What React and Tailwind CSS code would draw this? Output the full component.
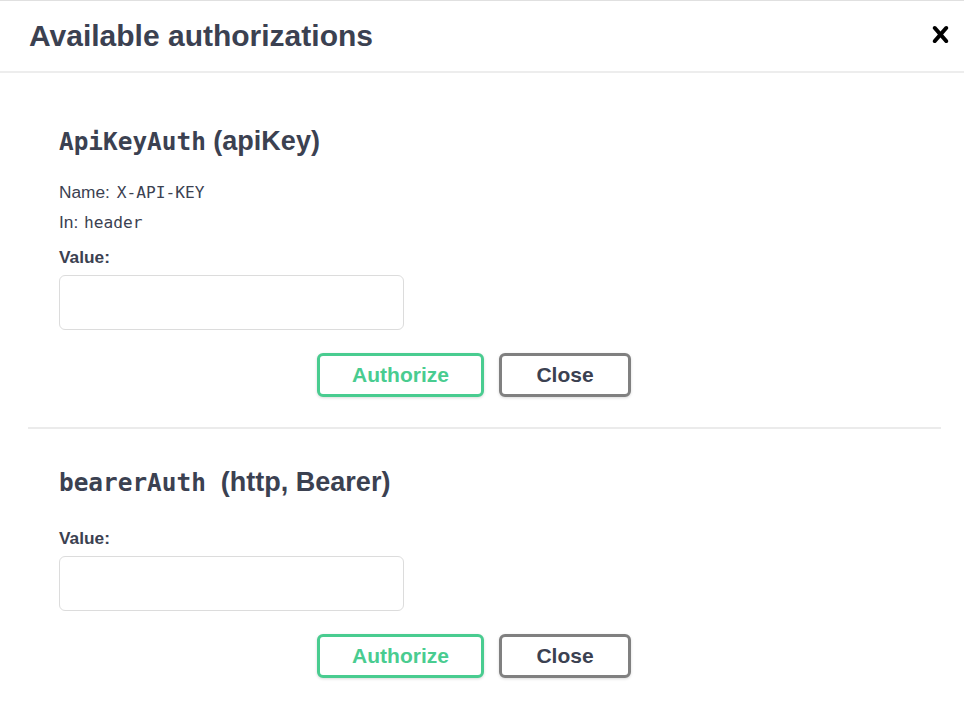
import React from "react";

const sans = { fontFamily: '"Liberation Sans", Arial, sans-serif' };

function CloseIcon() {
  return (
    <svg width="33" height="33" viewBox="0 0 20 20" aria-hidden="true">
      <path
        fill="#000"
        d="M14.348 14.849c-.469.469-1.229.469-1.697 0L10 11.819l-2.651 3.029c-.469.469-1.229.469-1.697 0-.469-.469-.469-1.229 0-1.697l2.758-3.15-2.759-3.152c-.469-.469-.469-1.228 0-1.697.469-.469 1.228-.469 1.697 0L10 8.183l2.651-3.031c.469-.469 1.228-.469 1.697 0 .469.469.469 1.229 0 1.697l-2.758 3.152 2.758 3.15c.469.469.469 1.229 0 1.698z"
      />
    </svg>
  );
}

function Buttons() {
  return (
    <div className="mt-[23px] flex justify-center">
      <button className="w-[167px] h-[44px] rounded-[6px] border-[3px] border-[#49cc90] bg-white text-[21px] font-bold text-[#49cc90] shadow-[0_1px_3px_rgba(0,0,0,0.15)] font-['Liberation_Sans',Arial,sans-serif]">
        Authorize
      </button>
      <button className="ml-[15px] mr-[21px] w-[132px] h-[44px] rounded-[6px] border-[3px] border-[#808080] bg-white text-[21px] font-bold text-[#3b4151] shadow-[0_1px_3px_rgba(0,0,0,0.15)] font-['Liberation_Sans',Arial,sans-serif]">
        Close
      </button>
    </div>
  );
}

function ValueField() {
  return (
    <>
      <div className="h-[30px] leading-[30px] text-[17.3px] font-bold text-[#3b4151]">Value:</div>
      <input
        type="text"
        className="mt-[3px] block w-[345px] h-[55px] rounded-[6px] border border-[#dcdcdc] bg-white outline-none"
      />
    </>
  );
}

export default function App() {
  return (
    <div className="w-[964px] h-[719px] bg-white border-t border-[#e0e0e0] text-[#3b4151] overflow-hidden" style={sans}>
      <div className="h-[72px] flex items-center justify-between pl-[29px] pr-[7px] border-b-2 border-[#ededed]">
        <h3 className="text-[30px] font-bold text-[#3b4151] leading-none">Available authorizations</h3>
        <button className="w-[33px] h-[33px] -mt-[4px]" aria-label="Close">
          <CloseIcon />
        </button>
      </div>

      <div className="pt-[15px] pl-[28px] pr-[23px]">
        <div className="pt-[37px] px-[31px] pb-[30px] border-b-2 border-[#ebebeb]">
          <h4 className="h-[32px] leading-[32px] text-[27px] font-bold whitespace-pre">
            <code className="font-['DejaVu_Sans_Mono',monospace] text-[24.4px] font-bold">ApiKeyAuth</code>
            {" (apiKey)"}
          </h4>
          <div className="mt-[20px] h-[30px] leading-[30px] text-[17.3px]">
            Name: <code className="ml-[2px] font-['DejaVu_Sans_Mono',monospace] text-[16.2px]">X-API-KEY</code>
          </div>
          <div className="h-[30px] leading-[30px] text-[17.3px]">
            In: <code className="ml-[1px] font-['DejaVu_Sans_Mono',monospace] text-[16.2px]">header</code>
          </div>
          <div className="mt-[5px]">
            <ValueField />
          </div>
          <Buttons />
        </div>

        <div className="pt-[37px] px-[31px]">
          <h4 className="h-[32px] leading-[32px] text-[27px] font-bold whitespace-pre">
            <code className="font-['DejaVu_Sans_Mono',monospace] text-[24.4px] font-bold">bearerAuth</code>
            {"\u00a0 (http, Bearer)"}
          </h4>
          <div className="mt-[25px]">
            <ValueField />
          </div>
          <Buttons />
        </div>
      </div>
    </div>
  );
}
